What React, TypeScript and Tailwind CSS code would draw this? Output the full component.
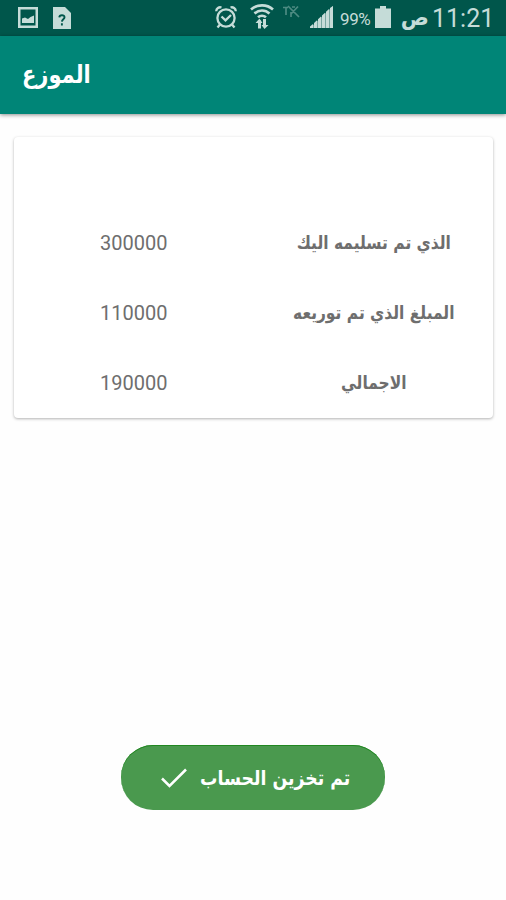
import React from "react";

interface AccountRow {
  label: string;
  value: string;
}

const rows: AccountRow[] = [
  { label: "الذي تم تسليمه اليك", value: "300000" },
  { label: "المبلغ الذي تم توريعه", value: "110000" },
  { label: "الاجمالي", value: "190000" },
];

const ImageIcon = () => (
  <svg width="20" height="21" viewBox="0 0 20 21" fill="none">
    <rect x="1.25" y="1.25" width="17.5" height="18.5" stroke="#c5dcd8" strokeWidth="2.5" />
    <path d="M4 16V11.500l3-1 3 1.500 2.500-2 3.500-1.500V16z" fill="#c5dcd8" />
  </svg>
);

const UnknownFileIcon = () => (
  <svg width="18" height="22" viewBox="0 0 18 22">
    <path d="M0 0h12l6 6v16H0z" fill="#c5dcd8" />
    <path d="M6.300 10.400c.2-3 5.400-2.800 5.200 0-.1 1.800-2.500 1.900-2.600 4.200M8.900 16.300v2.200" fill="none" stroke="#00564b" strokeWidth="1.900" />
  </svg>
);

const AlarmIcon = () => (
  <svg width="22" height="23" viewBox="0 0 22 23" fill="none" stroke="#c5dcd8" strokeWidth="2.3">
    <circle cx="11" cy="12" r="8.600" />
    <path d="M6.500 10.500l4 3.800 5.500-5.300M1.200 5.200A4 4 0 0 1 6.500 1.500M20.800 5.200a4 4 0 0 0-5.300-3.700M5 18.500l-2.500 3M17 18.500l2.500 3" />
  </svg>
);

const WifiIcon = () => (
  <svg width="24" height="26" viewBox="0 0 24 26" fill="none" stroke="#c5dcd8" strokeWidth="2.6">
    <path d="M1 5.500c6-5.500 16-5.500 22 0M4.500 9.500c4.300-4 10.700-4 15 0M8 13.300c2.300-2 5.700-2 8 0" />
    <path d="M9.500 24.500v-8M14.500 15v8" strokeWidth="3" />
    <path d="M5.500 19l4-4.500 3 4.500zM11.500 21l3 4 4-4z" fill="#c5dcd8" stroke="none" />
  </svg>
);

const MutedIcon = () => (
  <svg width="17" height="14" viewBox="0 0 17 14" fill="none" stroke="#4c8b82" strokeWidth="1.700">
    <path d="M0 2.500h5M3 2v8M5 1l11 11M8 12V7M7.500 9.500L15 1.500M9 2h3" />
  </svg>
);

const SignalIcon = () => (
  <svg width="23" height="22" viewBox="0 0 23 22" fill="#c5dcd8">
    <path d="M0 22L23 0v22z" opacity="0.6" />
    <path d="M0 22v-1.500L3 18v4zM4 22v-5l3-2.700V22zM8 22v-8.700l3-2.800V22zM12 22V9.500l3-2.800V22zM16 22V5.800l3-2.800v19zM20 22V2l3-2v22z" />
  </svg>
);

const BatteryIcon = () => (
  <svg width="16" height="22" viewBox="0 0 16 22" fill="#c5dcd8">
    <path d="M5 0h6v2.500h5V22H0V2.500h5z" />
  </svg>
);

const StatusBar = () => (
  <div className="flex h-9 items-start bg-[#00564b] font-[Roboto,sans-serif] text-[#c5dcd8]">
    <div className="flex gap-[15px] pl-[18px] pt-[7px]">
      <ImageIcon />
      <UnknownFileIcon />
    </div>
    <div className="ml-auto flex items-start pr-[13px]">
      <div className="mr-[13px] pt-[6px]"><AlarmIcon /></div>
      <div className="mr-[9px] pt-[4px]"><WifiIcon /></div>
      <div className="mr-[10px] pt-[5px]"><MutedIcon /></div>
      <div className="mr-[7px] pt-[6px]"><SignalIcon /></div>
      <span className="mr-[3px] w-[32px] pt-[9px] text-[17px] leading-5 tracking-[-0.4px]">99%</span>
      <div className="mr-[9px] pt-[6px]"><BatteryIcon /></div>
      <span className="w-[27px] scale-x-95 pt-[4px] text-center font-['DejaVu_Sans',sans-serif] text-[22px] font-bold leading-7">ص</span>
      <span className="ml-[5px] w-[61px] whitespace-nowrap pt-[5px] text-right text-[25px] leading-7">11:21</span>
    </div>
  </div>
);

const App: React.FC = () => {
  return (
    <div className="flex h-[900px] w-[506px] flex-col overflow-hidden bg-[#fefefe]">
      <StatusBar />

      {/* App bar */}
      <header className="flex h-[78px] items-center bg-[#008577] pl-[22px] shadow-[0_1px_4px_rgba(0,0,0,0.45)]">
        <h1 dir="rtl" className="origin-left scale-x-[0.84] font-['DejaVu_Sans',sans-serif] text-[25px] font-bold leading-8 text-white">الموزع</h1>
      </header>

      {/* Totals card */}
      <section className="ml-[14px] mr-[13px] mt-[23px] h-[281px] rounded-[4px] bg-white pt-[71px] shadow-[0_1px_3px_rgba(0,0,0,0.3)]">
        {rows.map((row) => (
          <div key={row.label} className="grid h-[70px] grid-cols-2 items-center text-center text-[#6e6e6e]">
            <span className="font-[Roboto,sans-serif] text-[20px] leading-6">{row.value}</span>
            <span dir="rtl" className="scale-x-[0.86] whitespace-nowrap font-['DejaVu_Sans',sans-serif] text-[18px] font-bold leading-6">{row.label}</span>
          </div>
        ))}
      </section>

      <button className="mx-auto mt-[327px] flex h-[65px] w-[264px] items-center rounded-[32px] bg-[#4a994e] pl-[40px] text-white shadow-[inset_0_1px_0_#218721]">
        <svg width="26" height="20" viewBox="0 0 26 20" fill="none" stroke="currentColor" strokeWidth="2.500">
          <path d="M1 10.500l7.500 7.500L25 1.500" />
        </svg>
        <span dir="rtl" className="ml-[13px] origin-left scale-x-[0.865] whitespace-nowrap font-['DejaVu_Sans',sans-serif] text-[20px] font-bold leading-7">تم تخزين الحساب</span>
      </button>
    </div>
  );
};

export default App;
